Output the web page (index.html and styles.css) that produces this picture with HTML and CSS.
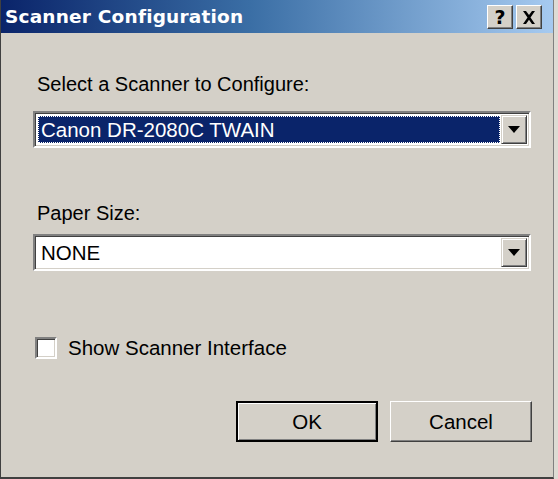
FILE: index.html
```html
<!DOCTYPE html>
<html>
<head>
<meta charset="utf-8">
<link rel="stylesheet" href="styles.css">
</head>
<body>
<div class="dialog">
  <div class="titlebar">
    <span class="title">Scanner Configuration</span>
    <div class="tbtns">
      <div class="tbtn help">?</div>
      <div class="tbtn close">
        <svg width="14" height="13" viewBox="0 0 14 13"><path d="M1 0h3l3 4 3-4h3l-4.5 6.5L13 13h-3l-3-4.3L4 13H1l4.5-6.5z" fill="#000"/></svg>
      </div>
    </div>
  </div>
  <div class="body">
    <div class="label first">Select a Scanner to Configure:</div>
    <div class="combo c1">
      <div class="field"><span class="sel">Canon DR-2080C TWAIN</span></div>
      <div class="dd"><svg width="12" height="7" viewBox="0 0 12 7"><path d="M0 0h12L6 7z" fill="#000"/></svg></div>
    </div>
    <div class="label second">Paper Size:</div>
    <div class="combo c2">
      <div class="field"><span class="plain">NONE</span></div>
      <div class="dd"><svg width="12" height="7" viewBox="0 0 12 7"><path d="M0 0h12L6 7z" fill="#000"/></svg></div>
    </div>
    <div class="check">
      <div class="box"></div>
      <span>Show Scanner Interface</span>
    </div>
    <div class="buttons">
      <div class="btn default"><span>OK</span></div>
      <div class="btn"><span>Cancel</span></div>
    </div>
  </div>
</div>
</body>
</html>
```
FILE: styles.css
```css
* { box-sizing: border-box; }
html, body { margin: 0; padding: 0; background: #dedbd4; }
body { width: 558px; height: 479px; overflow: hidden; }
.dialog {
  width: 554px; height: 479px;
  background: #d4d0c8;
  border-left: 1px solid #404040;
  border-bottom: 2px solid #404040;
  border-right: 1px solid #808080;
  display: flex; flex-direction: column;
  font-family: "Liberation Sans", Arial, sans-serif;
  color: #000;
}
.titlebar {
  height: 33px;
  background: linear-gradient(to right, #0a246a 0%, #3a6ea5 45%, #a6caf0 100%);
  display: flex; align-items: center; justify-content: space-between;
  padding: 0 11px 0 4px;
}
.title {
  color: #fff; font-family: "DejaVu Sans", Verdana, sans-serif; font-weight: bold; font-size: 18.5px;
  letter-spacing: 0.2px;
}
.tbtns { display: flex; gap: 3px; margin-top: 1px; }
.tbtn {
  width: 26px; height: 24px;
  background: #d4d0c8;
  border: 1px solid; border-color: #fff #404040 #404040 #fff;
  box-shadow: inset -1px -1px 0 #808080;
  display: flex; align-items: center; justify-content: center;
  font-weight: bold; font-size: 19px; font-family: "DejaVu Sans", sans-serif;
}
.body { padding: 0 22px 0 32px; display: flex; flex-direction: column; }
.label { font-size: 20px; line-height: 23px; margin-left: 4px; }
.label.first { margin-top: 40px; }
.label.second { margin-top: 54px; }
.combo {
  height: 37px;
  border: 2px solid; border-color: #808080 #fff #fff #808080;
  box-shadow: inset 1px 1px 0 #404040, inset -1px -1px 0 #d4d0c8;
  background: #fff;
  display: flex; align-items: stretch; padding: 2px;
}
.combo.c1 { margin-top: 15px; }
.combo.c2 { margin-top: 9px; }
.field { flex: 1; display: flex; align-items: stretch; padding: 1px; }
.sel {
  flex: 1; background: #0a246a; color: #fff; font-size: 20.5px;
  display: flex; align-items: center; padding-left: 3px;
  outline: 1px dotted #fff; outline-offset: -1px;
}
.plain { flex: 1; font-size: 20.5px; display: flex; align-items: center; padding-left: 3px; }
.dd {
  width: 26px; background: #d4d0c8;
  border: 1px solid; border-color: #d4d0c8 #404040 #404040 #d4d0c8;
  box-shadow: inset 1px 1px 0 #fff, inset -1px -1px 0 #808080;
  display: flex; align-items: center; justify-content: center;
}
.check { display: flex; align-items: center; margin-top: 65px; margin-left: 2px; font-size: 20.5px; line-height: 23px; }
.box {
  width: 22px; height: 22px; background: #fff;
  border: 2px solid; border-color: #808080 #fff #fff #808080;
  box-shadow: inset 1px 1px 0 #404040, inset -1px -1px 0 #d4d0c8;
  margin-right: 11px;
}
.buttons { display: flex; justify-content: flex-end; gap: 12px; margin-top: 42px; margin-right: -1px; }
.btn {
  width: 142px; height: 41px;
  border: 1px solid; border-color: #fff #404040 #404040 #fff;
  box-shadow: inset -1px -1px 0 #808080;
  display: flex; align-items: center; justify-content: center;
  font-size: 20.5px;
}
.btn.default {
  border: 2px solid #000;
  box-shadow: inset 1px 1px 0 #fff, inset -1px -1px 0 #808080;
}
```
